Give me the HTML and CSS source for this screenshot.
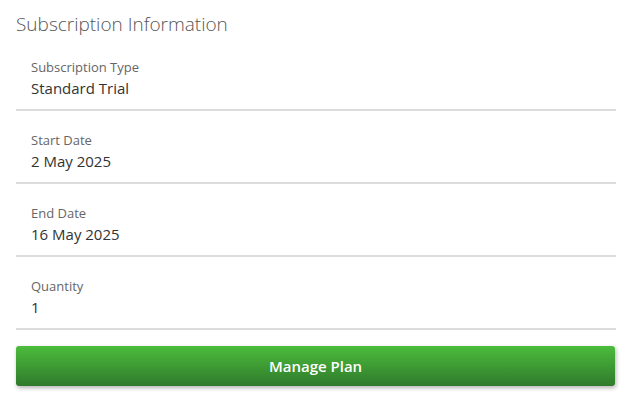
FILE: index.html
```html
<!DOCTYPE html>
<html lang="en">
<head>
    <meta charset="UTF-8">
    <meta name="viewport" content="width=device-width, initial-scale=1.0">
    <title>Subscription Information</title>
    <link rel="stylesheet" href="styles.css">
</head>
<body>
    <div class="panel">
        <h2 class="panel-title">Subscription Information</h2>
        <div class="info-row">
            <div class="info-label">Subscription Type</div>
            <div class="info-value">Standard Trial</div>
        </div>
        <div class="info-row">
            <div class="info-label">Start Date</div>
            <div class="info-value">2 May 2025</div>
        </div>
        <div class="info-row">
            <div class="info-label">End Date</div>
            <div class="info-value">16 May 2025</div>
        </div>
        <div class="info-row">
            <div class="info-label">Quantity</div>
            <div class="info-value">1</div>
        </div>
        <button class="manage-button">Manage Plan</button>
    </div>
</body>
</html>
```

FILE: styles.css
```css
body {
    font-family: "Open Sans", "Noto Sans", sans-serif;
    background-color: #fff;
    margin: 0;
    padding: 0;
}

.panel {
    width: 600px;
    padding: 10px 16px;
}

.panel-title {
    margin: 0;
    font-size: 19px;
    font-weight: 300;
    line-height: 28px;
    color: #555;
}

.info-row {
    padding: 19px 15px 10px;
    border-bottom: 2px solid #dcdcdc;
}

.info-label {
    font-size: 13px;
    line-height: 20px;
    color: #666;
}

.info-value {
    font-size: 15px;
    line-height: 22px;
    color: #333;
}

.manage-button {
    display: block;
    width: 599px;
    height: 40px;
    margin-top: 16px;
    border: none;
    border-radius: 3px;
    background: linear-gradient(to bottom, #4cbc3c, #2f7a2b);
    box-shadow: 1px 2px 4px rgba(0, 0, 0, 0.3);
    color: #fff;
    font-family: inherit;
    font-size: 15px;
    font-weight: 600;
    cursor: pointer;
}
```
